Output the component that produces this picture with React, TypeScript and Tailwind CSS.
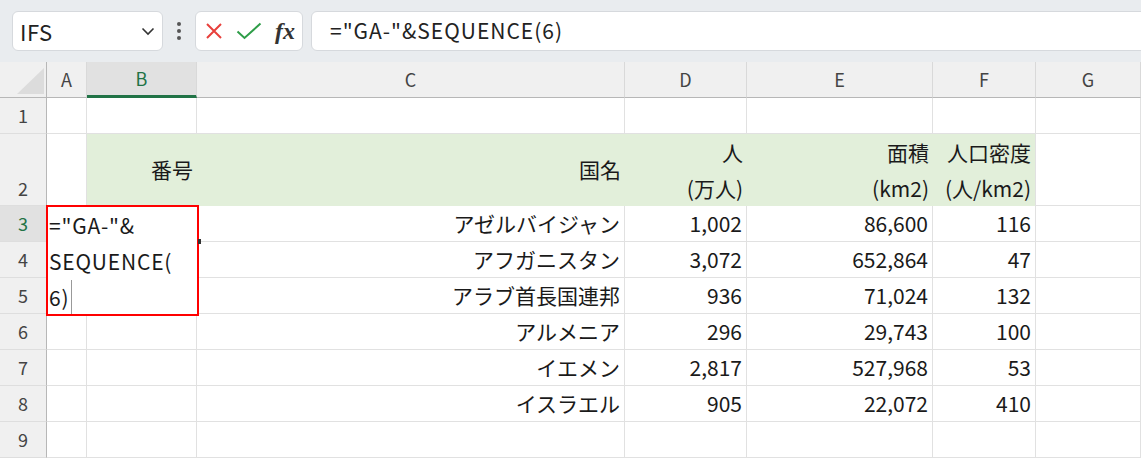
import React from "react";

const font = { fontFamily: '"Noto Sans CJK JP", "Noto Sans", sans-serif' };

const data = [
  ["アゼルバイジャン", "1,002", "86,600", "116"],
  ["アフガニスタン", "3,072", "652,864", "47"],
  ["アラブ首長国連邦", "936", "71,024", "132"],
  ["アルメニア", "296", "29,743", "100"],
  ["イエメン", "2,817", "527,968", "53"],
  ["イスラエル", "905", "22,072", "410"],
];

const cols = ["A", "B", "C", "D", "E", "F", "G"];

function RowHead({ n, h, sel }: { n: number; h: string; sel?: boolean }) {
  return (
    <div
      className={`${h} flex items-center justify-center border-r border-r-[#b7b7b7] border-b border-b-[#dedede] text-[18px] ${
        sel ? "bg-[#e1e1e1] text-[#217346]" : "bg-[#f0f0f0] text-[#444]"
      }`}
    >
      {n}
    </div>
  );
}

function Cell({ children, cls = "" }: { children?: React.ReactNode; cls?: string }) {
  return (
    <div className={`flex items-center justify-end pr-[4px] border-r border-b border-[#e1e1e1] bg-white text-[21px] text-[#1a1a1a] whitespace-nowrap ${cls}`}>
      {children}
    </div>
  );
}

export default function App() {
  return (
    <div className="w-[1141px] h-[459px] overflow-hidden bg-white relative" style={font}>
      {/* toolbar */}
      <div className="h-[62px] bg-[#e9ecef] flex items-center pl-[12px] gap-0">
        <div className="w-[151px] h-[40px] bg-white rounded-[6px] border border-[#d6d9dd] flex items-center pl-[7px] pr-[6px]">
          <span className="text-[22px] text-[#222] flex-1 tracking-[0.5px]">IFS</span>
          <svg width="16" height="16" viewBox="0 0 16 16" className="text-[#333]">
            <path d="M2.5 5.5 L8 11 L13.5 5.5" fill="none" stroke="currentColor" strokeWidth="1.6" />
          </svg>
        </div>
        <div className="w-[32px] flex flex-col items-center gap-[3px]">
          <div className="w-[4px] h-[4px] rounded-full bg-[#555]" />
          <div className="w-[4px] h-[4px] rounded-full bg-[#555]" />
          <div className="w-[4px] h-[4px] rounded-full bg-[#555]" />
        </div>
        <div className="w-[108px] h-[40px] bg-white rounded-[6px] border border-[#d6d9dd] flex items-center pl-[8px] gap-[12px]">
          <svg width="20" height="20" viewBox="0 0 20 20">
            <path d="M3 3 L17 17 M17 3 L3 17" stroke="#e8403c" strokeWidth="2" fill="none" />
          </svg>
          <svg width="26" height="20" viewBox="0 0 26 20">
            <path d="M1.5 10.5 L8.5 17 L24.5 2.5" stroke="#2e9d48" strokeWidth="2" fill="none" />
          </svg>
          <span className="text-[24px] italic font-bold text-[#333] leading-none ml-[1px]" style={{ fontFamily: '"Liberation Serif", serif' }}>
            fx
          </span>
        </div>
        <div className="flex-1 h-[40px] ml-[8px] mr-[-10px] bg-white rounded-[6px] border border-[#d6d9dd] flex items-center pl-[18px]">
          <span className="text-[21px] text-[#222] tracking-[1px]">="GA-"&amp;SEQUENCE(6)</span>
        </div>
      </div>

      {/* sheet */}
      <div className="grid grid-cols-[47px_40px_110px_428px_122px_186px_103px_105px] grid-rows-[36px_36px_72px_repeat(7,36px)]">
        {/* header row */}
        <div className="relative bg-[#f0f0f0] border-r border-r-[#b7b7b7] border-b border-b-[#b7b7b7]">
          <svg className="absolute left-[17px] top-[6px]" width="27" height="26" viewBox="0 0 27 26">
            <polygon points="27,0 27,26 0,26" fill="#dcdcdc" />
          </svg>
        </div>
        {cols.map((c) => (
          <div
            key={c}
            className={`flex items-center justify-center text-[18px] border-r border-r-[#d9d9d9] ${
              c === "B"
                ? "bg-[#e1e1e1] text-[#217346] border-b-[3px] border-b-[#217346]"
                : "bg-[#f0f0f0] text-[#444] border-b border-b-[#b7b7b7]"
            }`}
          >
            {c}
          </div>
        ))}

        {/* row 1 */}
        <RowHead n={1} h="" />
        {cols.map((c) => (
          <Cell key={c} />
        ))}

        {/* row 2 */}
        <RowHead n={2} h="items-end pb-[3px]" />
        <Cell />
        <div className="flex items-center justify-end pr-[4px] bg-[#e2efda] text-[21px] text-[#1a1a1a]">番号</div>
        <div className="flex items-center justify-end pr-[4px] bg-[#e2efda] text-[21px] text-[#1a1a1a]">国名</div>
        <div className="flex flex-col justify-center items-end pr-[4px] bg-[#e2efda] text-[21px] leading-[36px] text-[#1a1a1a]">
          <span>人</span>
          <span>(万人)</span>
        </div>
        <div className="flex flex-col justify-center items-end pr-[4px] bg-[#e2efda] text-[21px] leading-[36px] text-[#1a1a1a]">
          <span>面積</span>
          <span>(km2)</span>
        </div>
        <div className="flex flex-col justify-center items-end pr-[4px] bg-[#e2efda] text-[21px] leading-[36px] text-[#1a1a1a] border-r border-[#e1e1e1]">
          <span>人口密度</span>
          <span>(人/km2)</span>
        </div>
        <Cell />

        {/* data rows */}
        {data.map((r, i) => (
          <React.Fragment key={i}>
            <RowHead n={i + 3} h="" sel={i === 0} />
            <Cell />
            <Cell />
            <Cell>{r[0]}</Cell>
            <Cell>{r[1]}</Cell>
            <Cell>{r[2]}</Cell>
            <Cell>{r[3]}</Cell>
            <Cell />
          </React.Fragment>
        ))}

        {/* row 9 */}
        <RowHead n={9} h="" />
        {cols.map((c) => (
          <Cell key={c} />
        ))}
      </div>

      {/* editing cell overlay */}
      <div className="absolute left-[46px] top-[205px] w-[153px] h-[111px] border-2 border-[#ff0000] bg-white text-[21px] leading-[36px] text-[#1a1a1a] pl-[1px] tracking-[0.8px]">
        <div>="GA-"&amp;</div>
        <div>SEQUENCE(</div>
        <div className="flex items-center">
          <span>6)</span>
          <span className="inline-block w-[1px] h-[34px] bg-[#999] ml-[2px]" />
        </div>
      </div>
      <div className="absolute left-[198px] top-[239px] w-[3px] h-[5px] bg-[#333]" />
    </div>
  );
}
